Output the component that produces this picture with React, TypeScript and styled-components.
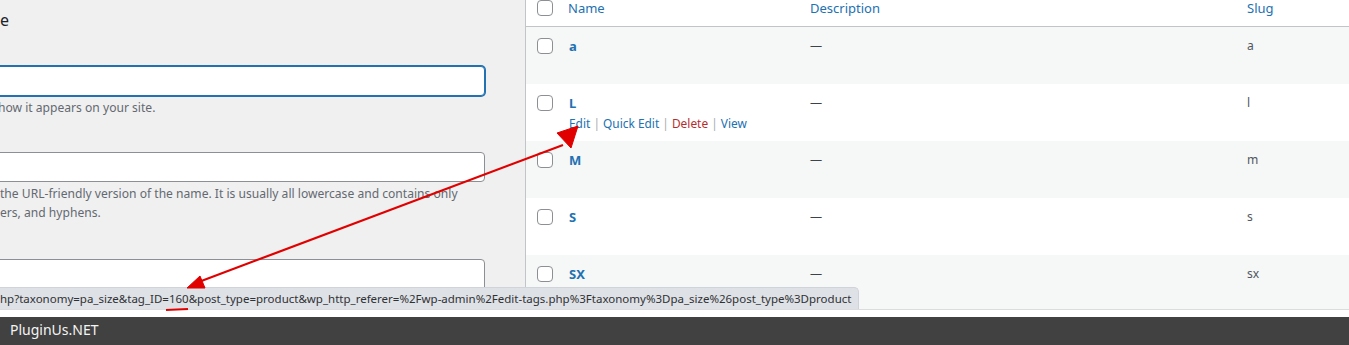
import React from "react";
import styled, { createGlobalStyle } from "styled-components";

const GlobalStyle = createGlobalStyle`
  html, body {
    margin: 0;
    padding: 0;
    background: #fff;
    overflow: hidden;
  }
  body {
    font-family: "Noto Sans", "Open Sans", sans-serif;
    -webkit-font-smoothing: antialiased;
  }
`;

const Screen = styled.div`
  position: relative;
  width: 1349px;
  height: 345px;
  display: flex;
  flex-direction: column;
  overflow: hidden;
`;

const Viewport = styled.div`
  position: relative;
  height: 309px;
  flex: none;
  display: grid;
  grid-template-columns: 525px 1fr;
  background: #f0f0f1;
  border-bottom: 1px solid #dcdcde;
  overflow: hidden;
`;

const FormCol = styled.div`
  padding: 0 40px 0 0;
  overflow: hidden;
  color: #646970;
  font-size: 12.1px;
`;

const HeadingTail = styled.div`
  margin-top: 9px;
  height: 22px;
  line-height: 22px;
  font-size: 16px;
  color: #1d2327;
`;

const Field = styled.div<{ $top: number }>`
  margin-top: ${(p) => p.$top}px;
`;

const TextInput = styled.input<{ $focused?: boolean; $tall?: boolean }>`
  display: block;
  box-sizing: border-box;
  margin: 0 0 0 -10px;
  width: calc(100% + 10px);
  height: ${(p) => (p.$tall ? "80px" : "30px")};
  padding: 0 8px;
  background: #fff;
  border: 1px solid ${(p) => (p.$focused ? "#2271b1" : "#8c8f94")};
  box-shadow: ${(p) => (p.$focused ? "0 0 0 1px #2271b1" : "none")};
  border-radius: 4px;
  outline: none;
`;

const Help = styled.p<{ $shift?: number }>`
  margin: 2px 0 0 ${(p) => -(p.$shift ?? 0)}px;
  line-height: 19px;
  white-space: nowrap;
`;

const TablePanel = styled.div`
  background: #fff;
  border-left: 1px solid #c3c4c7;
  color: #50575e;
  font-size: 12.1px;
`;

const Columns = `
  display: grid;
  grid-template-columns: 32px 242px 437px 1fr;
`;

const HeadRow = styled.div`
  ${Columns}
  height: 26px;
  border-bottom: 1px solid #c3c4c7;
  color: #2271b1;
  font-size: 13px;
  line-height: 16px;
`;

const BodyRow = styled.div<{ $striped: boolean }>`
  ${Columns}
  height: 57px;
  background: ${(p) => (p.$striped ? "#f6f7f7" : "#fff")};
`;

const CheckCell = styled.div<{ $top: number }>`
  padding: ${(p) => p.$top}px 0 0 11px;
`;

const Checkbox = styled.span`
  display: block;
  box-sizing: border-box;
  width: 16px;
  height: 16px;
  background: #fff;
  border: 1px solid #8c8f94;
  border-radius: 4px;
`;

const Cell = styled.div`
  padding: 9px 10px 0;
  line-height: 20px;
  white-space: nowrap;
`;

const NameCell = styled(Cell)`
  padding-left: 11px;
`;

const HeadCell = styled.div`
  padding: 0 10px;
  white-space: nowrap;
`;

const TermName = styled.a`
  color: #2271b1;
  font-weight: 700;
  font-size: 13px;
  text-decoration: none;
`;

const Dash = styled.span`
  color: #3c434a;
`;

const RowActions = styled.div`
  margin-top: 0;
  line-height: 19px;
  font-size: 11.9px;
  color: #a7aaad;
`;

const ActionLink = styled.a<{ $danger?: boolean }>`
  color: ${(p) => (p.$danger ? "#b32d2e" : "#2271b1")};
  text-decoration: none;
`;

const StatusBubble = styled.div`
  position: absolute;
  left: 0;
  bottom: 0;
  box-sizing: border-box;
  height: 22px;
  padding: 0 7px 0 0;
  background: #dee1e6;
  border-top: 1px solid #d0d3d8;
  border-right: 1px solid #d0d3d8;
  border-top-right-radius: 5px;
  color: #303134;
  font-size: 11.5px;
  line-height: 21px;
  white-space: nowrap;
`;

const WhiteGap = styled.div`
  height: 7px;
  flex: none;
  background: #fff;
`;

const Footer = styled.div`
  flex: 1;
  background: #414141;
  color: #f4f4f4;
  font-size: 14px;
  line-height: 26px;
  padding-left: 10px;
`;

const Annotation = styled.svg`
  position: absolute;
  inset: 0;
  pointer-events: none;
`;

const terms = [
  { name: "a", slug: "a" },
  { name: "L", slug: "l", hover: true },
  { name: "M", slug: "m" },
  { name: "S", slug: "s" },
  { name: "SX", slug: "sx" },
];

const hoverUrl =
  "hp?taxonomy=pa_size&tag_ID=160&post_type=product&wp_http_referer=%2Fwp-admin%2Fedit-tags.php%3Ftaxonomy%3Dpa_size%26post_type%3Dproduct";

function App() {
  return (
    <Screen>
      <GlobalStyle />
      <Viewport>
        <FormCol>
          <HeadingTail>e</HeadingTail>
          <Field $top={35}>
            <TextInput $focused />
            <Help $shift={2}>how it appears on your site.</Help>
          </Field>
          <Field $top={35}>
            <TextInput />
            <Help>
              the URL-friendly version of the name. It is usually all lowercase and contains only
              <br />
              ers, and hyphens.
            </Help>
          </Field>
          <Field $top={37}>
            <TextInput $tall />
          </Field>
        </FormCol>

        <TablePanel>
          <HeadRow>
            <CheckCell $top={0}>
              <Checkbox />
            </CheckCell>
            <HeadCell>Name</HeadCell>
            <HeadCell>Description</HeadCell>
            <HeadCell>Slug</HeadCell>
          </HeadRow>
          {terms.map((t, i) => (
            <BodyRow key={t.slug} $striped={i % 2 === 0}>
              <CheckCell $top={11}>
                <Checkbox />
              </CheckCell>
              <NameCell>
                <TermName>{t.name}</TermName>
                {t.hover && (
                  <RowActions>
                    <ActionLink>Edit</ActionLink> | <ActionLink>Quick Edit</ActionLink> |{" "}
                    <ActionLink $danger>Delete</ActionLink> | <ActionLink>View</ActionLink>
                  </RowActions>
                )}
              </NameCell>
              <Cell>
                <Dash>—</Dash>
              </Cell>
              <Cell>{t.slug}</Cell>
            </BodyRow>
          ))}
        </TablePanel>

        <StatusBubble>{hoverUrl}</StatusBubble>
      </Viewport>
      <WhiteGap />
      <Footer>PluginUs.NET</Footer>

      <Annotation width="1349" height="345" viewBox="0 0 1349 345">
        <g fill="#e00000" stroke="#e00000" strokeLinejoin="round">
          <line x1="196" y1="283" x2="563" y2="145" strokeWidth="2.2" />
          <polygon points="578,126 557,133 571,148" strokeWidth="1" />
          <polygon points="187,288 200,276 205,288" strokeWidth="1" />
          <path d="M166 310 Q177 309.5 188 309" fill="none" strokeWidth="2" />
        </g>
      </Annotation>
    </Screen>
  );
}

export default App;
